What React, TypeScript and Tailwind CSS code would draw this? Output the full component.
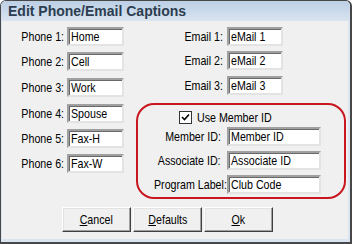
import React from "react";

const font = { fontFamily: '"Liberation Sans", Arial, sans-serif' };

function N({ children, o = "origin-left" }: { children: React.ReactNode; o?: string }) {
  return <span className={`inline-block whitespace-nowrap scale-x-[0.82] ${o}`}>{children}</span>;
}

function Field({ value, w }: { value: string; w: string }) {
  return (
    <div
      className={`${w} h-[19px] bg-white border-2 border-t-[#a0a0a0] border-l-[#a0a0a0] border-r-[#e3e3e3] border-b-[#e3e3e3] shadow-[inset_1px_1px_0_#696969] flex items-center pl-[2px] text-[13px] leading-none text-black whitespace-nowrap overflow-hidden`}
    >
      <N>{value}</N>
    </div>
  );
}

function Row({ label, value, labelW, inputW, gap, className = "" }: { label: string; value: string; labelW: string; inputW: string; gap: string; className?: string }) {
  return (
    <div className={`flex items-center ${gap} ${className}`}>
      <div className={`${labelW} text-right text-[13px] leading-none text-black whitespace-nowrap`}>
        <N o="origin-right">{label}</N>
      </div>
      <Field value={value} w={inputW} />
    </div>
  );
}

function Btn({ children }: { children: React.ReactNode }) {
  return (
    <div className="w-[69px] h-[25px] bg-[#f0f0f0] border border-t-white border-l-white border-r-[#404040] border-b-[#404040] shadow-[inset_-1px_-1px_0_#a0a0a0,inset_1px_1px_0_#e3e3e3] flex items-center justify-center text-[13px] leading-none text-black">
      <N o="origin-center">{children}</N>
    </div>
  );
}

export default function App() {
  return (
    <div style={font} className="w-[352px] h-[244px] box-border flex flex-col border-l border-t border-r-2 border-b-2 border-[#474747] rounded-t-[6px] bg-[#dbe5f1] overflow-hidden">
      <div className="h-[20px] shrink-0 bg-gradient-to-b from-[#bccfe5] to-[#d9e4f0] flex items-center pl-[7px]">
        <span className="text-[14px] font-bold text-[#2c3d50] leading-none">
          Edit Phone/Email Captions
        </span>
      </div>
      <div className="flex-1 ml-[1px] mr-[2px] mb-[3px] bg-[#f0f0f0] flex flex-col pt-[6px]">
        <div className="flex">
          <div className="flex flex-col w-[122px]">
            <Row label="Phone 1:" value="Home" labelW="w-[62px]" inputW="w-[57px]" gap="gap-[3px]" />
            <Row label="Phone 2:" value="Cell" labelW="w-[62px]" inputW="w-[57px]" gap="gap-[3px]" className="mt-[6px]" />
            <Row label="Phone 3:" value="Work" labelW="w-[62px]" inputW="w-[57px]" gap="gap-[3px]" className="mt-[7px]" />
            <Row label="Phone 4:" value="Spouse" labelW="w-[62px]" inputW="w-[57px]" gap="gap-[3px]" className="mt-[7px]" />
            <Row label="Phone 5:" value="Fax-H" labelW="w-[62px]" inputW="w-[57px]" gap="gap-[3px]" className="mt-[6px]" />
            <Row label="Phone 6:" value="Fax-W" labelW="w-[62px]" inputW="w-[57px]" gap="gap-[3px]" className="mt-[6px]" />
          </div>
          <div className="flex flex-col ml-[12px] w-[210px]">
            <Row label="Email 1:" value="eMail 1" labelW="w-[87px]" inputW="w-[56px]" gap="gap-[4px]" />
            <Row label="Email 2:" value="eMail 2" labelW="w-[87px]" inputW="w-[56px]" gap="gap-[4px]" className="mt-[5px]" />
            <Row label="Email 3:" value="eMail 3" labelW="w-[87px]" inputW="w-[56px]" gap="gap-[4px]" className="mt-[6px]" />
            <div className="mt-[8px] h-[96px] border-2 border-[#c8171e] rounded-[18px] flex flex-col pt-[6px]">
              <div className="flex items-center pl-[41px] gap-[5px]">
                <div className="w-[13px] h-[13px] bg-white border border-[#333] flex items-center justify-center">
                  <svg width="9" height="9" viewBox="0 0 9 9">
                    <path d="M1 4 L3.5 6.5 L8 1.5" stroke="#000" strokeWidth="1.6" fill="none" />
                  </svg>
                </div>
                <span className="text-[13px] leading-none text-black">
                  <N>Use Member ID</N>
                </span>
              </div>
              <Row label="Member ID:" value="Member ID" labelW="w-[83px]" inputW="w-[94px]" gap="gap-[6px]" className="mt-[3px]" />
              <Row label="Associate ID:" value="Associate ID" labelW="w-[83px]" inputW="w-[94px]" gap="gap-[6px]" className="mt-[5px]" />
              <Row label="Program Label:" value="Club Code" labelW="w-[83px]" inputW="w-[94px]" gap="gap-[6px]" className="mt-[5px]" />
            </div>
          </div>
        </div>
        <div className="flex gap-[2px] pl-[60px] mt-[8px]">
          <Btn><span className="underline">C</span>ancel</Btn>
          <Btn><span className="underline">D</span>efaults</Btn>
          <Btn><span className="underline">O</span>k</Btn>
        </div>
      </div>
    </div>
  );
}
